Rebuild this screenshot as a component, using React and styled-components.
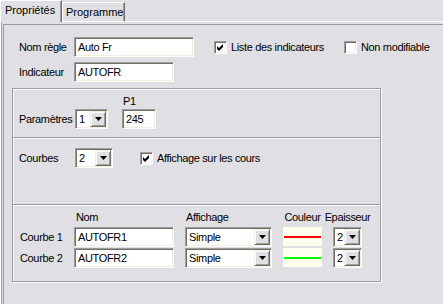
import React from 'react';
import styled, { createGlobalStyle } from 'styled-components';

const GlobalStyle = createGlobalStyle`
  html, body {
    margin: 0;
    padding: 0;
    background: #e0dfe3;
  }
  body {
    font-family: "Liberation Sans", Arial, sans-serif;
    font-size: 11px;
    letter-spacing: -0.35px;
    color: #000;
  }
`;

const Window = styled.div`
  width: 443px;
  height: 304px;
  background: #e0dfe3;
  overflow: hidden;
  display: flex;
  flex-direction: column;
`;

const TabStrip = styled.div`
  display: flex;
  align-items: flex-end;
  height: 22px;
  flex: none;
`;

const Tab = styled.div`
  box-sizing: border-box;
  width: ${p => p.$width}px;
  height: ${p => (p.$active ? 22 : 20)}px;
  padding: 3px 0 0 ${p => (p.$active ? 4 : 3)}px;
  border-top: 1px solid #fff;
  border-left: 1px solid #fff;
  border-right: 1px solid #716f64;
  border-bottom: ${p => (p.$active ? 'none' : '1px solid #fff')};
  box-shadow: inset -1px 0 0 #9d9da1;
  line-height: 13px;
  letter-spacing: 0;
  white-space: nowrap;
`;

const StripFill = styled.div`
  flex: 1;
  border-bottom: 1px solid #fff;
`;

const Page = styled.div`
  flex: 1;
  display: flex;
  border-left: 1px solid #fff;
  box-shadow: inset 1px 0 0 #9d9da1;
  padding: 2px 0 0 2px;
`;

const Sunken = styled.div`
  flex: 1;
  display: flex;
  flex-direction: column;
  border-top: 1px solid #9d9da1;
  border-left: 1px solid #9d9da1;
`;

const TopSection = styled.div`
  display: flex;
  flex-direction: column;
  gap: 5px;
  padding: 12px 0 0 15px;
`;

const Row = styled.div`
  display: flex;
  align-items: center;
  height: 20px;
`;

const Label = styled.div`
  width: ${p => p.$width || 55}px;
  flex: none;
  white-space: nowrap;
  line-height: 13px;
`;

const sunkenBorder = `
  box-sizing: border-box;
  border: 1px solid;
  border-color: #9d9da1 #fff #fff #9d9da1;
  box-shadow: inset 1px 1px 0 #716f64, inset -1px -1px 0 #f1efe2;
`;

const TextBox = styled.div`
  ${sunkenBorder}
  width: ${p => p.$width}px;
  height: 20px;
  flex: none;
  background: #fff;
  padding: 2px 0 0 3px;
  line-height: 14px;
  white-space: nowrap;
`;

const CheckItem = styled.div`
  display: flex;
  align-items: center;
  gap: 4px;
  width: ${p => (p.$width ? `${p.$width}px` : 'auto')};
  margin-left: ${p => p.$offset || 0}px;
  white-space: nowrap;
`;

const CheckBox = styled.div`
  ${sunkenBorder}
  width: 13px;
  height: 13px;
  flex: none;
  background: #fff;
  position: relative;

  & svg {
    position: absolute;
    left: 0;
    top: 0;
  }
`;

const SelectField = styled.div`
  ${sunkenBorder}
  width: ${p => p.$width}px;
  height: 20px;
  flex: none;
  display: flex;
  align-items: center;
  background: #fff;
  padding: 1px;
`;

const SelectValue = styled.div`
  flex: 1;
  padding-left: 2px;
  line-height: 14px;
  white-space: nowrap;
  overflow: hidden;
`;

const DropButton = styled.div`
  box-sizing: border-box;
  width: 16px;
  height: 16px;
  flex: none;
  display: flex;
  align-items: center;
  justify-content: center;
  background: #e0dfe3;
  border: 1px solid;
  border-color: #f1efe2 #716f64 #716f64 #f1efe2;
  box-shadow: inset 1px 1px 0 #fff, inset -1px -1px 0 #9d9da1;
`;

const GroupBox = styled.div`
  box-sizing: border-box;
  width: 369px;
  height: 194px;
  margin: 6px 0 0 8px;
  border: 1px solid #9d9da1;
  box-shadow: inset 1px 1px 0 #fff, 1px 1px 0 #fff;
  display: flex;
  flex-direction: column;
`;

const Section = styled.div`
  box-sizing: border-box;
  height: ${p => (p.$height ? `${p.$height}px` : 'auto')};
  flex: ${p => (p.$grow ? 1 : 'none')};
  padding: ${p => p.$pad};
  ${p => p.$separated && `
    border-top: 1px solid #9d9da1;
    box-shadow: inset 0 1px 0 #fff;
  `}
`;

const ParamGrid = styled.div`
  display: grid;
  grid-template-columns: 56px 47px auto;
  grid-template-rows: 13px 20px;
  row-gap: 1px;
  align-items: center;
`;

const ColumnHead = styled.div`
  line-height: 13px;
  white-space: nowrap;
  justify-self: ${p => p.$align || 'start'};
  padding-left: ${p => p.$indent || 0}px;
  align-self: start;
`;

const CurveGrid = styled.div`
  display: grid;
  grid-template-columns: 43px 100px 87px 39px 29px;
  grid-template-rows: 15px 20px 20px;
  column-gap: 11px;
  row-gap: 1px;
  align-items: center;
`;

const Swatch = styled.div`
  width: 39px;
  height: 19px;
  background: #ffffef;
  display: flex;
  align-items: center;
  padding: 0 1px;
  box-sizing: border-box;
  margin-top: -1px;

  &::after {
    content: '';
    flex: 1;
    height: 2px;
    background: ${p => p.$color};
  }
`;

const Check = () => (
  <CheckBox>
    <svg width="11" height="11" viewBox="0 0 11 11">
      <polygon points="2,4 4,6 8,2 8,5 4,9 2,7" fill="#000" />
    </svg>
  </CheckBox>
);

const Select = ({ width, value }) => (
  <SelectField $width={width}>
    <SelectValue>{value}</SelectValue>
    <DropButton>
      <svg width="7" height="4" viewBox="0 0 7 4">
        <polygon points="0,0 7,0 3.5,4" fill="#000" />
      </svg>
    </DropButton>
  </SelectField>
);

const curves = [
  { label: 'Courbe 1', name: 'AUTOFR1', mode: 'Simple', color: '#ff0000', width: '2' },
  { label: 'Courbe 2', name: 'AUTOFR2', mode: 'Simple', color: '#00ff00', width: '2' },
];

const App = () => {
  return (
    <Window>
      <GlobalStyle />
      <TabStrip>
        <Tab $active $width={62}>Propriétés</Tab>
        <Tab $width={63}>Programme</Tab>
        <StripFill />
      </TabStrip>
      <Page>
        <Sunken>
          <TopSection>
            <Row>
              <Label>Nom règle</Label>
              <TextBox $width={120}>Auto Fr</TextBox>
              <CheckItem $offset={20} $width={130}>
                <Check />
                Liste des indicateurs
              </CheckItem>
              <CheckItem>
                <CheckBox />
                Non modifiable
              </CheckItem>
            </Row>
            <Row>
              <Label>Indicateur</Label>
              <TextBox $width={100}>AUTOFR</TextBox>
            </Row>
          </TopSection>

          <GroupBox>
            <Section $height={48} $pad="6px 0 0 6px">
              <ParamGrid>
                <span />
                <span />
                <ColumnHead $indent={1}>P1</ColumnHead>
                <Label>Paramètres</Label>
                <Select width={33} value="1" />
                <TextBox $width={34}>245</TextBox>
              </ParamGrid>
            </Section>

            <Section $separated $height={67} $pad="10px 0 0 6px">
              <Row>
                <Label $width={56}>Courbes</Label>
                <Select width={38} value="2" />
                <CheckItem $offset={27}>
                  <Check />
                  Affichage sur les cours
                </CheckItem>
              </Row>
            </Section>

            <Section $separated $grow $pad="6px 0 0 7px">
              <CurveGrid>
                <span />
                <ColumnHead $indent={2}>Nom</ColumnHead>
                <ColumnHead $indent={1}>Affichage</ColumnHead>
                <ColumnHead $align="center">Couleur</ColumnHead>
                <ColumnHead $align="center">Epaisseur</ColumnHead>
                {curves.map(c => (
                  <React.Fragment key={c.label}>
                    <Label>{c.label}</Label>
                    <TextBox $width={100}>{c.name}</TextBox>
                    <Select width={87} value={c.mode} />
                    <Swatch $color={c.color} />
                    <Select width={29} value={c.width} />
                  </React.Fragment>
                ))}
              </CurveGrid>
            </Section>
          </GroupBox>
        </Sunken>
      </Page>
    </Window>
  );
};

export default App;
